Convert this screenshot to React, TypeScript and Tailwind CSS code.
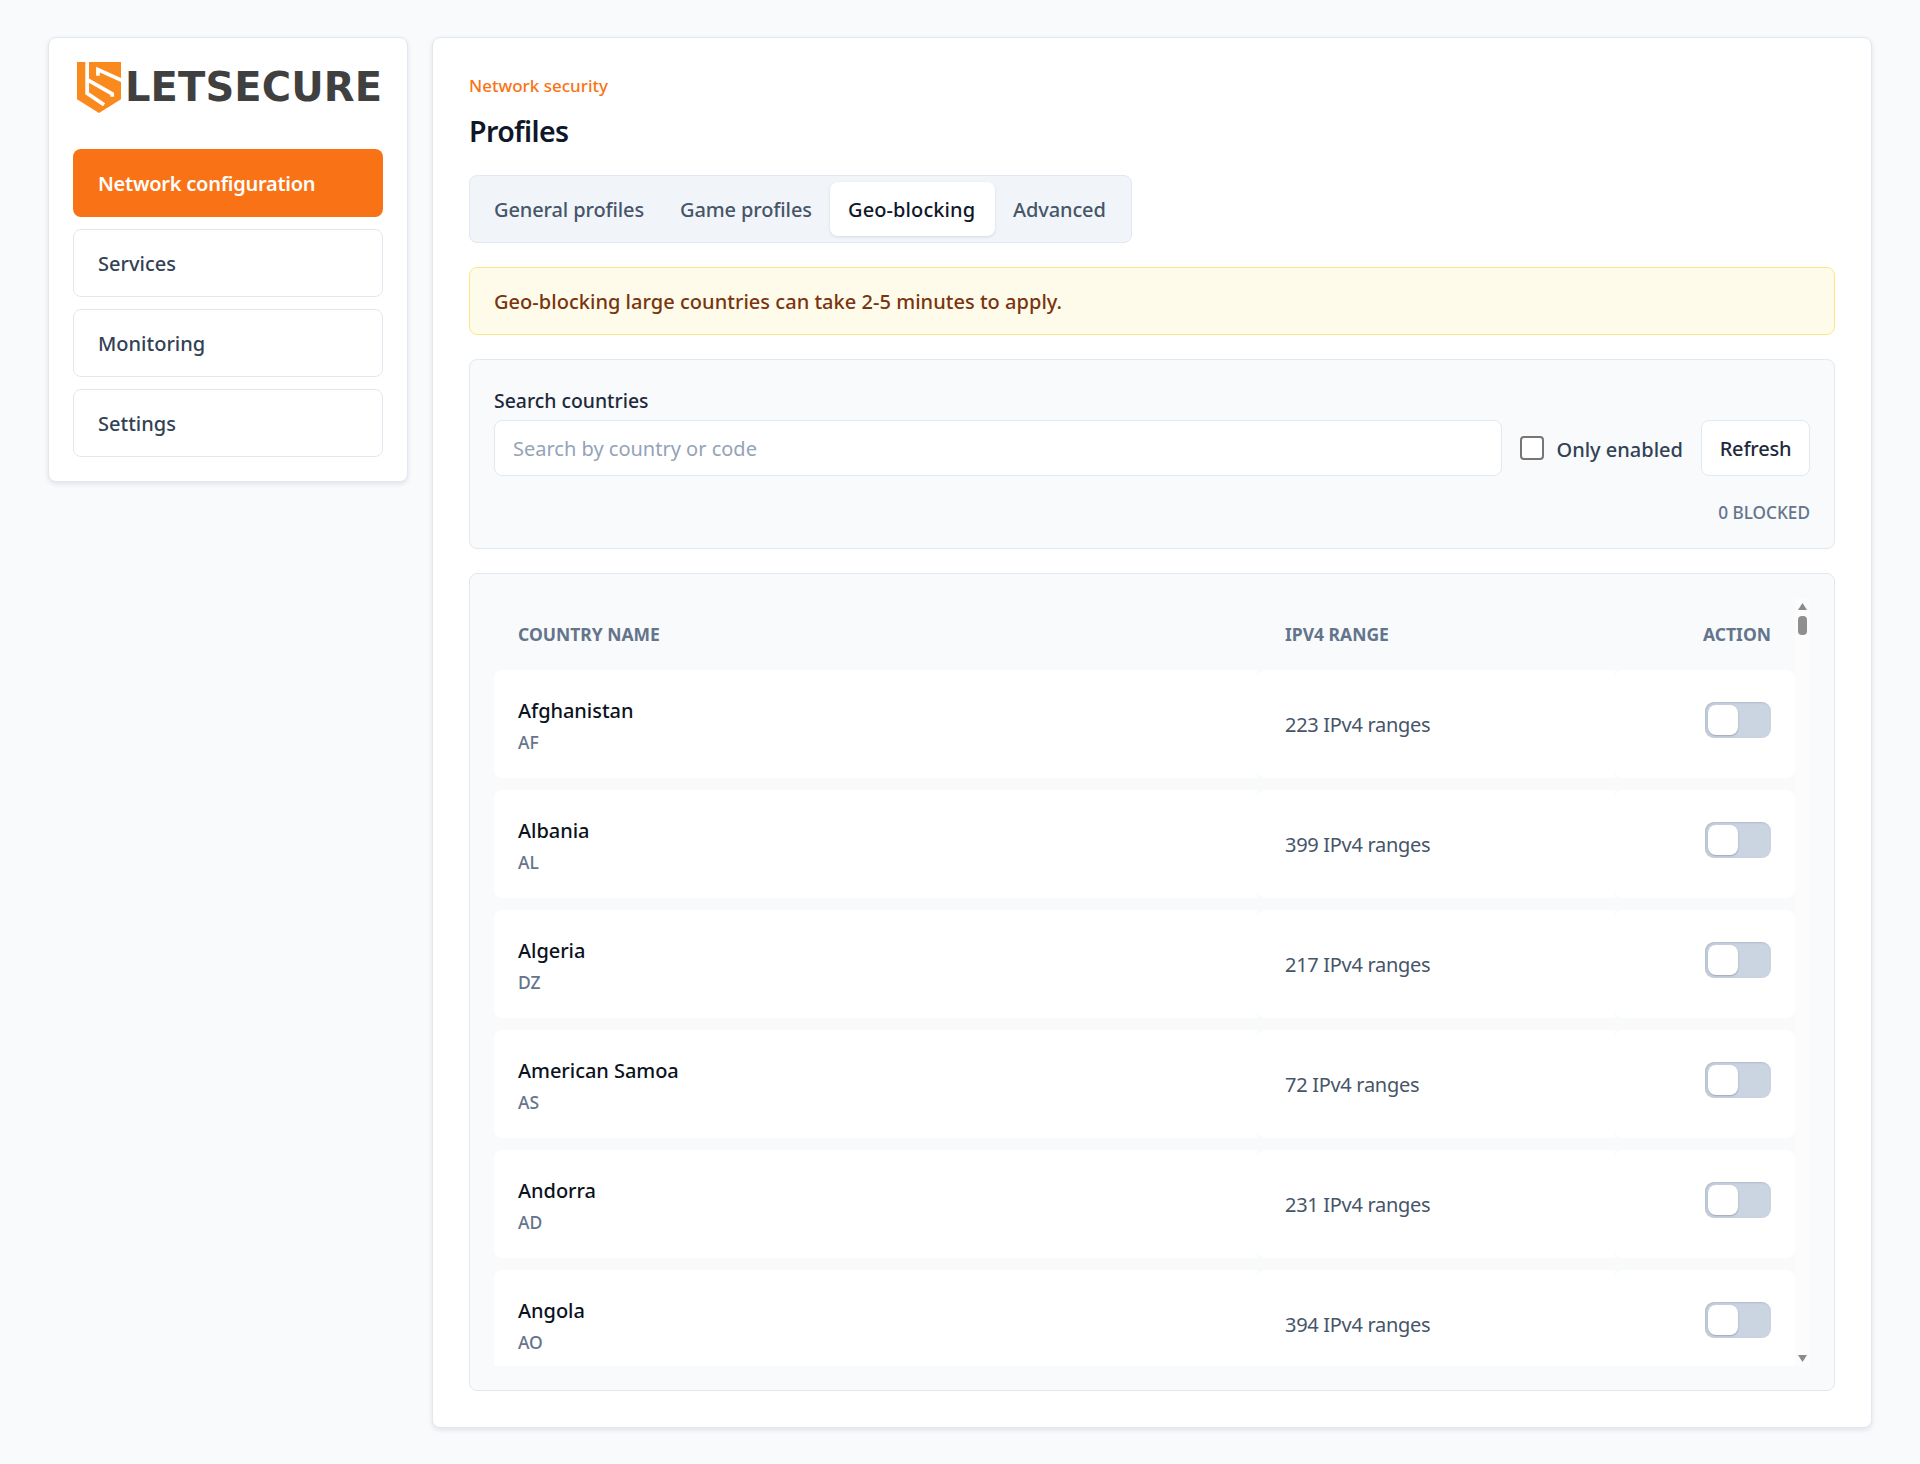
import React from 'react';

const FONT = "font-['Noto_Sans','Open_Sans',sans-serif]";

const navItems = ['Network configuration', 'Services', 'Monitoring', 'Settings'];
const tabs = [
  { label: 'General profiles', width: 'w-[186px]' },
  { label: 'Game profiles', width: 'w-[168px]' },
  { label: 'Geo-blocking', width: 'w-[165px]' },
  { label: 'Advanced', width: 'w-[129px]' },
];

const countries = [
  { name: 'Afghanistan', code: 'AF', ranges: 223 },
  { name: 'Albania', code: 'AL', ranges: 399 },
  { name: 'Algeria', code: 'DZ', ranges: 217 },
  { name: 'American Samoa', code: 'AS', ranges: 72 },
  { name: 'Andorra', code: 'AD', ranges: 231 },
  { name: 'Angola', code: 'AO', ranges: 394 },
];

// Shield mark, traced from the logo
function LogoMark() {
  return (
    <svg width="44" height="51" viewBox="0 0 130 150" className="shrink-0">
      <path fill="#fb8a1e" d="M0 0H130V110L65 150L0 110Z" />
      <path fill="none" stroke="#fff" strokeWidth="11" d="M30 -2V92L80 126" />
      <path fill="none" stroke="#fff" strokeWidth="11" d="M30 52L104 94V102" />
      <path fill="none" stroke="#fff" strokeWidth="11" d="M132 54L62 22V40" />
    </svg>
  );
}

function Toggle() {
  return (
    <div className="flex h-[36px] w-[66px] items-center rounded-[9px] bg-[#cbd5e1] pl-[3px] shadow-[inset_1px_1px_2px_rgba(100,116,139,0.25)]">
      <div className="h-[30px] w-[30px] rounded-[8px] bg-white shadow-[0_1px_2px_rgba(15,23,42,0.25)]" />
    </div>
  );
}

function Sidebar() {
  return (
    <aside className="w-[360px] shrink-0 self-start rounded-[8px] border border-[#e2e8f0] bg-white p-[24px] shadow-[0_2px_5px_rgba(15,23,42,0.1)]">
      <div className="flex h-[87px] items-start gap-[4px] pl-[4px]">
        <LogoMark />
        <span className="font-['DejaVu_Sans',sans-serif] text-[40px] font-bold leading-[51px] tracking-[0.1px] text-[#404040]">LETSECURE</span>
      </div>
      <nav className="flex flex-col gap-[12px]">
        {navItems.map((item, i) => (
          <div
            key={item}
            className={
              i === 0
                ? 'flex h-[68px] items-center rounded-[8px] bg-[#f97316] px-[25px] pt-[2px] text-[20px] font-semibold tracking-[-0.25px] text-white'
                : 'flex h-[68px] items-center rounded-[8px] border border-[#e2e8f0] bg-white px-[24px] pt-[2px] text-[20px] font-medium text-[#334155]'
            }
          >
            {item}
          </div>
        ))}
      </nav>
    </aside>
  );
}

function Tabs() {
  return (
    <div className="mt-[25px] flex h-[68px] w-[663px] items-center rounded-[8px] border border-[#e2e8f0] bg-[#f1f5f9] px-[6px]">
      {tabs.map((tab) => (
        <div
          key={tab.label}
          className={
            tab.label === 'Geo-blocking'
              ? `${tab.width} flex h-[54px] items-center whitespace-nowrap rounded-[8px] bg-white px-[18px] pt-[2px] text-[20px] font-medium tracking-[0.1px] text-[#0f172a] shadow-[0_1px_3px_rgba(15,23,42,0.12)]`
              : `${tab.width} flex h-[54px] items-center whitespace-nowrap px-[18px] pt-[2px] text-[20px] font-medium tracking-[-0.12px] text-[#475569]`
          }
        >
          {tab.label}
        </div>
      ))}
    </div>
  );
}

function SearchPanel() {
  return (
    <div className="mt-[24px] h-[190px] rounded-[8px] border border-[#e2e8f0] bg-[#f8fafc] px-[24px] pt-[24px]">
      <div className="flex h-[36px] items-start text-[19.4px] font-medium leading-[33px] text-[#1e293b]">Search countries</div>
      <div className="flex h-[56px] items-center gap-[18px]">
        <input
          readOnly
          placeholder="Search by country or code"
          className="h-[56px] min-w-0 flex-1 rounded-[8px] border border-[#e2e8f0] bg-white px-[18px] text-[20px] placeholder:text-[#94a3b8]"
        />
        <label className="flex items-center gap-[12px] text-[20px] font-medium text-[#334155]">
          <span className="h-[24px] w-[24px] rounded-[4px] border-2 border-[#767676] bg-white" />
          <span className="pt-[3px]">Only enabled</span>
        </label>
        <button className="h-[56px] w-[109px] rounded-[8px] border border-[#e2e8f0] bg-white pt-[2px] text-[20px] font-medium tracking-[-0.2px] text-[#1e293b]">Refresh</button>
      </div>
      <div className="mt-[24px] text-right text-[17.2px] font-medium leading-[26px] text-[#64748b]">0 BLOCKED</div>
    </div>
  );
}

function FakeScrollbar() {
  return (
    <div className="flex h-[768px] w-[15px] shrink-0 flex-col items-center bg-[#fcfcfd] pt-[5px]">
      <svg width="9" height="7" viewBox="0 0 9 7"><path fill="#8a8a8a" d="M4.5 0L9 7H0Z" /></svg>
      <div className="mt-[6px] h-[19px] w-[9px] rounded-[4px] bg-[#8f8f8f]" />
      <svg width="9" height="7" viewBox="0 0 9 7" className="mt-auto mb-[4px]"><path fill="#8a8a8a" d="M0 0H9L4.5 7Z" /></svg>
    </div>
  );
}

function CountryTable() {
  return (
    <div className="mt-[24px] h-[818px] rounded-[8px] border border-[#e2e8f0] bg-[#f8fafc] px-[24px] pt-[24px]">
      <div className="flex">
        <div className="h-[768px] min-w-0 flex-1 overflow-hidden">
          <div className="grid h-[72px] grid-cols-[763px_358px_180px] items-center pt-[1px] text-[17.5px] font-bold text-[#64748b]">
            <div className="pl-[24px]">COUNTRY NAME</div>
            <div className="pl-[28px]">IPV4 RANGE</div>
            <div className="pr-[24px] text-right">ACTION</div>
          </div>
          <div className="flex flex-col gap-[12px]">
            {countries.map((c) => (
              <div key={c.code} className="grid h-[108px] shrink-0 grid-cols-[763px_358px_180px]">
                <div className="rounded-l-[8px] bg-white pl-[24px] pt-[24px]">
                  <div className="text-[20px] font-medium leading-[33px] tracking-[-0.05px] text-[#0b1220]">{c.name}</div>
                  <div className="text-[17.5px] font-medium leading-[31px] text-[#64748b]">{c.code}</div>
                </div>
                <div className="flex items-center rounded-l-[8px] bg-white pl-[28px] pt-[2px] text-[20px] tracking-[-0.3px] text-[#475569]">{c.ranges} IPv4 ranges</div>
                <div className="flex justify-end rounded-[8px] bg-white pr-[24px] pt-[32px]">
                  <Toggle />
                </div>
              </div>
            ))}
          </div>
        </div>
        <FakeScrollbar />
      </div>
    </div>
  );
}

export default function App() {
  return (
    <div className={`${FONT} flex min-h-[1464px] items-start gap-[24px] bg-[#f8fafc] px-[48px] pb-[36px] pt-[37px]`}>
      <Sidebar />
      <main className="h-[1391px] min-w-0 flex-1 rounded-[8px] border border-[#e2e8f0] bg-white p-[36px] shadow-[0_2px_5px_rgba(15,23,42,0.1)]">
        <div className="pt-[1px] text-[17px] font-medium leading-[22px] text-[#f97316]">Network security</div>
        <h1 className="mt-[15px] text-[28.5px] font-semibold leading-[38px] tracking-[-0.6px] text-[#0f172a]">Profiles</h1>
        <Tabs />
        <div className="mt-[24px] flex h-[68px] items-center rounded-[8px] border border-[#fde68a] bg-[#fffbeb] px-[24px] pt-[2px] text-[20px] font-medium tracking-[0.03px] text-[#78350f]">
          Geo-blocking large countries can take 2-5 minutes to apply.
        </div>
        <SearchPanel />
        <CountryTable />
      </main>
    </div>
  );
}
